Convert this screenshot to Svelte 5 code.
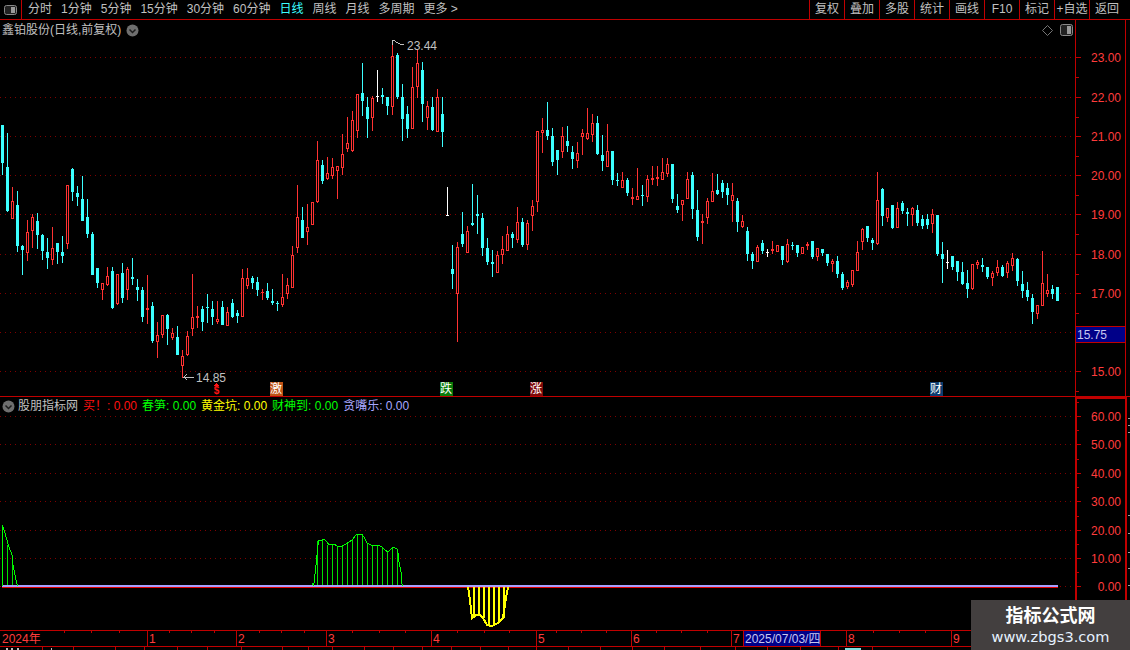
<script>
  const raw = `c 125 163 125 175|c 167 211 133 212|r 201 219 187 219|c 205 246 191 252|c 246 250 245 275|r 232 253 220 261|r 217 231 214 248|c 221 235 213 249|c 235 251 234 260|c 252 258 238 269|r 248 260 227 265|c 243 252 243 264|c 252 256 236 263|r 185 244 185 249|c 169 192 168 201|c 193 197 186 206|c 199 221 176 221|c 217 234 199 238|c 234 275 232 275|c 268 283 268 288|r 283 290 283 300|r 276 285 267 286|c 271 308 267 309|r 274 304 274 305|c 273 298 263 303|r 269 290 267 300|c 277 279 258 285|c 287 290 279 301|c 290 317 287 322|r 308 310 275 324|c 306 341 302 343|r 335 342 322 358|r 315 335 315 338|c 315 329 314 345|r 333 338 328 340|c 337 355 326 355|r 356 366 350 378|r 336 355 331 356|r 317 329 274 336|r 316 318 306 328|c 309 322 306 331|c 307 308 294 323|c 309 317 301 325|r 319 322 301 324|c 307 325 301 325|r 312 326 307 326|c 303 317 299 318|c 313 316 310 323|r 278 317 269 317|r 278 286 268 289|c 278 283 276 289|c 282 290 277 296|r 292 293 289 300|c 291 298 283 300|c 301 303 289 305|c 303 304 301 311|r 297 305 274 307|r 285 294 278 299|r 255 288 246 288|r 217 248 185 253|c 220 238 207 238|r 227 232 204 245|r 202 225 202 225|r 160 202 141 203|c 165 181 160 184|r 173 179 157 180|r 167 176 158 179|r 166 171 166 199|r 154 168 134 175|r 143 149 117 152|r 120 151 111 152|r 94 131 94 138|c 93 101 63 116|c 107 119 97 138|r 98 118 96 131|w 96 97 70 102|c 95 97 88 104|c 97 106 97 115|r 56 107 40 115|c 55 97 53 99|c 97 119 84 141|c 114 129 106 138|r 87 129 67 129|r 63 87 49 98|c 70 104 62 122|r 106 118 101 130|c 107 130 97 131|r 97 132 89 132|c 114 132 97 147|w 215 216 187 216|c 269 274 245 289|r 247 294 242 342|c 234 244 212 247|r 231 253 226 253|c 223 225 184 226|c 214 216 195 234|c 218 248 213 256|c 248 262 238 265|c 262 264 250 277|r 255 273 251 273|r 249 255 236 264|r 234 251 226 251|c 234 238 232 248|r 222 240 207 243|c 222 245 218 247|r 223 245 220 250|r 206 216 200 231|r 131 202 131 212|r 130 133 118 153|c 130 136 102 140|c 136 162 128 166|c 150 160 150 175|r 136 152 127 158|c 141 146 126 152|c 152 159 146 169|r 153 161 142 168|r 133 137 129 155|r 133 139 108 140|r 123 135 114 142|c 123 154 116 155|c 155 161 135 171|r 151 167 124 167|c 151 180 151 185|c 180 181 173 186|r 180 188 172 188|c 180 193 178 196|r 197 199 188 205|r 196 200 168 200|c 195 196 185 206|r 179 197 175 202|r 178 180 166 185|r 177 179 166 186|r 172 180 158 180|r 164 174 158 177|c 164 199 164 203|c 206 210 194 213|r 200 205 200 221|r 179 199 172 199|c 175 209 172 219|c 210 237 190 241|r 221 223 214 244|r 201 218 198 224|r 191 202 173 202|c 190 194 174 195|c 183 192 180 198|c 188 195 183 205|r 195 201 183 222|c 201 222 198 232|r 221 227 215 228|c 231 254 227 261|c 254 261 252 269|r 247 262 245 262|c 243 251 240 254|w 252 253 249 257|r 249 251 241 254|r 245 252 245 252|c 246 260 246 265|r 244 262 239 263|c 245 246 242 250|c 245 253 245 257|r 247 254 247 254|r 244 246 242 250|c 241 257 241 259|r 248 257 248 261|c 249 253 249 256|c 254 263 254 266|r 261 264 259 272|c 261 274 256 278|c 274 288 272 290|r 282 287 280 289|r 270 285 270 287|r 252 271 241 271|r 229 242 228 250|c 226 238 226 242|c 240 243 238 250|r 200 244 172 245|c 189 216 188 226|r 208 218 208 222|c 205 228 205 229|r 208 228 202 228|c 203 211 201 214|c 212 214 208 226|r 208 215 207 226|c 210 223 205 226|c 219 226 215 229|c 219 225 214 229|r 214 224 209 233|c 215 254 215 256|c 254 259 242 283|w 262 263 250 269|c 256 267 256 270|c 261 272 261 281|c 272 284 262 285|c 283 289 270 298|r 264 289 264 290|r 262 265 260 269|c 265 267 258 272|c 267 277 267 279|r 273 278 271 286|r 267 273 260 276|c 267 276 265 277|r 263 273 261 278|r 258 266 253 271|c 259 281 258 286|c 284 291 271 298|c 290 297 282 301|c 298 312 294 324|r 305 314 305 319|r 283 306 251 306|r 290 294 274 297|c 289 294 285 299|c 287 301 287 301`;

  const candles = raw.split('|').map((s, i) => {
    const [t, bt, bb, wt, wb] = s.split(' ');
    return { t, x: 2 + 5 * i, bt: +bt, bb: +bb, wt: +wt, wb: +wb };
  });

  const priceRows = [
    [57, '23.00'], [97, '22.00'], [136, '21.00'], [175, '20.00'], [214, '19.00'],
    [254, '18.00'], [293, '17.00'], [371, '15.00']
  ];
  const gridY = [57, 97, 136, 175, 214, 254, 293, 332, 371];
  const subRows = [
    [416, '60.00'], [444, '50.00'], [473, '40.00'], [501, '30.00'],
    [530, '20.00'], [558, '10.00'], [586, '0.00']
  ];

  const menu = ['分时', '1分钟', '5分钟', '15分钟', '30分钟', '60分钟', '日线', '周线', '月线', '多周期', '更多 >'];
  const tools = ['复权', '叠加', '多股', '统计', '画线', 'F10', '标记', '+自选', '返回'];
  const legend = [
    ['买！:', '0.00', 'red'], ['春笋:', '0.00', 'green'], ['黄金坑:', '0.00', 'yellow'],
    ['财神到:', '0.00', 'green'], ['贪嘴乐:', '0.00', 'lilac']
  ];

  const markers = [
    { x: 270, t: '激', c: '#bf5316' }, { x: 440, t: '跌', c: '#0a7a0a' },
    { x: 530, t: '涨', c: '#7e0a0a' }, { x: 930, t: '财', c: '#0c3c70' }
  ];

  const hump = [[313, 586], [314, 583], [316, 565], [318, 545], [318, 541], [322, 540], [324, 539], [327, 542], [329, 545], [331, 544], [334, 544], [337, 546], [342, 546], [346, 544], [349, 542], [352, 540], [356, 535], [359, 534], [362, 534], [365, 539], [367, 543], [371, 545], [374, 545], [378, 545], [382, 547], [385, 550], [388, 552], [392, 548], [393, 547], [397, 549], [398, 553], [399, 562], [401, 572], [402, 584], [403, 586]];
  const humpBars = Array.from({ length: 19 }, (_, k) => {
    const x = 312.5 + 5 * k;
    const tops = [583, 541, 539, 545, 544, 546, 546, 544, 540, 534, 534, 543, 545, 545, 547, 552, 547, 550, 584];
    return { x, y: tops[k] };
  });
  const edge = [[2, 586], [2, 525], [4, 530], [7, 540], [9, 547], [12, 555], [13, 565], [15, 575], [17, 584], [18, 586]];
  const edgeBars = [[2.5, 525], [7.5, 545], [12.5, 558], [17.5, 584]];

  const pit = [[468, 587], [470, 600], [472, 618], [476, 615], [480, 615], [483, 618], [487, 625], [492, 626], [498, 623], [503, 618], [506, 598], [508, 587]];
  const pitBars = [[468, 587], [473, 618], [478, 615], [483, 618], [488, 625], [493, 626], [498, 623], [503, 618], [507, 590]];

  const pts = (a) => a.map((p) => p.join(',')).join(' ');

  const monthMarks = [
    [147, '1'], [236, '2'], [326, '3'], [431, '4'], [536, '5'], [631, '6'], [731, '7'], [846, '8'], [951, '9']
  ];
  const ticks = [64, 91, 119, 169, 191, 214, 259, 281, 304, 352, 379, 405, 457, 484, 509, 556, 581, 606, 656, 681, 707, 873, 899, 925];
  const bottomDiv = [42, 73, 115, 144, 177, 207, 241, 282, 308, 332, 364, 393, 422, 451, 480, 508, 536, 568, 600, 632, 664, 700, 735, 767, 800, 838, 872];
  const edgeTicks = [418, 425, 432, 515, 533, 552, 568, 585];
</script>

<div class="app">
  <header class="toolbar">
    <button class="panel-toggle" aria-label="切换">
      <svg width="13" height="10" viewBox="0 0 13 10">
        <rect x="0.5" y="0.5" width="12" height="9" rx="2" fill="#222" stroke="#888" />
        <rect x="7" y="2" width="4" height="6" fill="#999" />
      </svg>
    </button>
    <nav class="menu">
      {#each menu as m}
        <span class:active={m === '日线'}>{m}</span>
      {/each}
    </nav>
    <div class="tools">
      {#each tools as t}
        <span class="tool">{t}</span>
      {/each}
    </div>
  </header>

  <section class="pane main-pane">
    <div class="pane-title">
      <span>鑫铂股份(日线,前复权)</span>
      <svg class="chev" width="13" height="13" viewBox="0 0 13 13">
        <circle cx="6.5" cy="6.5" r="6" fill="#6e6e6e" />
        <path d="M3.5 5.5 L6.5 8.5 L9.5 5.5" fill="none" stroke="#1c1c1c" stroke-width="1.5" />
      </svg>
    </div>
    <div class="pane-icons">
      <svg width="11" height="11" viewBox="0 0 11 11">
        <path d="M5.5 0.5 L10.5 5.5 L5.5 10.5 L0.5 5.5 Z" fill="none" stroke="#777" />
      </svg>
      <svg width="13" height="12" viewBox="0 0 13 12">
        <rect x="0.5" y="0.5" width="12" height="11" rx="2" fill="#222" stroke="#888" />
        <rect x="7" y="2" width="4" height="8" fill="#999" />
      </svg>
    </div>
    <svg class="plot" width="1075" height="376" viewBox="0 20 1075 376" shape-rendering="crispEdges">
      {#each gridY as y}
        <line class="grid" x1="0" x2="1075" y1={y + 0.5} y2={y + 0.5} />
      {/each}
      {#each candles as c}
        <rect class={c.t + '-fill'} x={c.x} y={c.wt} width="1" height={c.wb - c.wt} />
        {#if c.t === 'r' && c.bb - c.bt > 2}
          <rect class="hollow" x={c.x - 0.5} y={c.bt + 0.5} width="2" height={c.bb - c.bt - 1} />
        {:else}
          <rect class={c.t + '-fill'} x={c.x - 1} y={c.bt} width="3" height={Math.max(c.bb - c.bt, 1)} />
        {/if}
      {/each}
      <polyline class="note-line" points="392,45 392,40 394,40 396,42 400,44 404,44" />
      <text class="note" x="407" y="50">23.44</text>
      <polyline class="note-line" points="187,374 184,377 194,377 184,377 187,380" />
      <text class="note" x="196" y="382">14.85</text>
      <polygon class="dollar-mark" points="216.5,383 213.5,386 219.5,386" />
      <text class="dollar" x="216.5" y="394">$</text>
      {#each markers as m}
        <rect x={m.x} y="382" width="13" height="14" fill={m.c} />
        <text class="marker" x={m.x} y="393">{m.t}</text>
      {/each}
    </svg>
    <svg class="axis" width="55" height="376" viewBox="1075 20 55 376" shape-rendering="crispEdges">
      <line class="ax" x1="1075.5" x2="1075.5" y1="20" y2="396" />
      <line class="ax" x1="1125.5" x2="1125.5" y1="20" y2="396" />
      {#each priceRows as [y, label]}
        <line class="ax" x1="1076" x2="1081" y1={y + 0.5} y2={y + 0.5} />
        <line class="ax" x1="1076" x2="1079" y1={y + 20.5} y2={y + 20.5} />
        <text class="price" x="1121" y={y + 5}>{label}</text>
      {/each}
      <rect class="last-box" x="1075.5" y="326.5" width="50" height="16" />
      <text class="last-price" x="1077" y="339">15.75</text>
    </svg>
  </section>

  <section class="pane sub-pane">
    <div class="pane-title legend">
      <svg class="chev" width="13" height="13" viewBox="0 0 13 13">
        <circle cx="6.5" cy="6.5" r="6" fill="#6e6e6e" />
        <path d="M3.5 5.5 L6.5 8.5 L9.5 5.5" fill="none" stroke="#1c1c1c" stroke-width="1.5" />
      </svg>
      <span class="legend-name">股朋指标网</span>
      {#each legend as [name, value, tone]}
        <span class="legend-item {tone}">{name} {value}</span>
      {/each}
    </div>
    <svg class="plot" width="1075" height="233" viewBox="0 397 1075 233" shape-rendering="crispEdges">
      {#each subRows as [y]}
        <line class="grid" x1="0" x2="1075" y1={y + 0.5} y2={y + 0.5} />
      {/each}
      <line class="base-red" x1="2" x2="1058" y1="587.5" y2="587.5" />
      <rect class="base-lilac" x="2" y="585" width="1056" height="2" />
      {#each edgeBars as [x, y]}
        <line class="green-bar" x1={x} x2={x} y1={y} y2="585" />
      {/each}
      {#each humpBars as b}
        <line class="green-bar" x1={b.x} x2={b.x} y1={b.y} y2="585" />
      {/each}
      {#each pitBars as [x, y]}
        <line class="yellow-bar" x1={x + 0.5} x2={x + 0.5} y1="587" y2={y} />
      {/each}
      <polyline class="green-line" points={pts(edge)} />
      <polyline class="green-line" points={pts(hump)} />
      <polyline class="yellow-line" points={pts(pit)} />
    </svg>
    <svg class="axis" width="55" height="233" viewBox="1075 397 55 233" shape-rendering="crispEdges">
      <rect class="ax-fill" x="1075" y="397" width="52" height="2" />
      <rect class="ax-fill" x="1075" y="397" width="2" height="233" />
      <rect class="ax-fill" x="1125" y="397" width="2" height="233" />
      {#each subRows as [y, label]}
        <line class="ax" x1="1077" x2="1081" y1={y + 0.5} y2={y + 0.5} />
        <line class="ax" x1="1077" x2="1079" y1={y - 13.5} y2={y - 13.5} />
        <text class="price" x="1121" y={y + 5}>{label}</text>
      {/each}
      {#each edgeTicks as y}
        <line class="edge-tick" x1="1128" x2="1130" y1={y + 0.5} y2={y + 0.5} />
      {/each}
    </svg>
  </section>

  <footer class="timeline">
    <svg width="1130" height="20" viewBox="0 630 1130 20" shape-rendering="crispEdges">
      <line class="ax" x1="0" x2="1130" y1="630.5" y2="630.5" />
      <line class="ax" x1="0" x2="1130" y1="646.5" y2="646.5" />
      {#each ticks as x}
        <line class="ax" x1={x + 0.5} x2={x + 0.5} y1="631" y2="633" />
      {/each}
      <text class="month" x="2" y="643">2024年</text>
      {#each monthMarks as [x, label]}
        <line class="ax" x1={x + 0.5} x2={x + 0.5} y1="631" y2="646" />
        <text class="month" x={x + 2} y="643">{label}</text>
      {/each}
      <rect class="date-box" x="743.5" y="630.5" width="77" height="16" />
      <text class="date-text" x="745" y="643">2025/07/03/四</text>
      {#each bottomDiv as x}
        <line class="ax" x1={x + 0.5} x2={x + 0.5} y1="647" y2="650" />
      {/each}
      <rect class="peek" x="6" y="648" width="2" height="2" />
      <rect class="peek" x="11" y="648" width="2" height="2" />
      <rect class="peek" x="17" y="648" width="2" height="2" />
      <rect class="peek" x="51" y="648" width="1" height="2" />
      <rect class="peek-cyan" x="845" y="648" width="16" height="2" />
    </svg>
  </footer>

  <aside class="watermark">
    <strong>指标公式网</strong>
    <span>www.zbgs3.com</span>
  </aside>
</div>

<style>
  :global(body) {
    margin: 0;
    background: #000;
  }
  .app {
    position: relative;
    width: 1130px;
    height: 650px;
    overflow: hidden;
    background: #000;
    display: flex;
    flex-direction: column;
    font-family: "Liberation Sans", "Noto Sans CJK SC", sans-serif;
    font-size: 12px;
    color: #c0c0c0;
  }
  .toolbar {
    display: flex;
    height: 19px;
    border-bottom: 1px solid #c00000;
    flex: none;
    line-height: 19px;
    white-space: nowrap;
  }
  .panel-toggle {
    width: 22px;
    height: 19px;
    padding: 0;
    background: none;
    border: 0;
    border-right: 1px solid #c00000;
    display: flex;
    align-items: center;
    justify-content: center;
  }
  .menu {
    display: flex;
    gap: 9px;
    padding-left: 6px;
  }
  .menu .active {
    color: #3cffff;
  }
  .tools {
    display: flex;
    margin-left: auto;
  }
  .tool {
    width: 34px;
    border-left: 1px solid #c00000;
    text-align: center;
    flex: none;
  }
  .tool:last-child {
    width: 34px;
    padding-right: 6px;
  }
  .pane {
    position: relative;
    display: flex;
    flex: none;
  }
  .main-pane {
    height: 376px;
  }
  .sub-pane {
    height: 233px;
    border-top: 1px solid #c00000;
  }
  .pane svg {
    display: block;
    flex: none;
  }
  .pane-title {
    position: absolute;
    left: 2px;
    top: 2px;
    display: flex;
    align-items: center;
    gap: 5px;
    height: 16px;
    line-height: 16px;
    white-space: nowrap;
  }
  .legend {
    left: 2px;
    top: 1px;
    gap: 5px;
  }
  .legend-name {
    margin-left: -2px;
  }
  .legend-item.red { color: #ff1010; }
  .legend-item.green { color: #00ff00; }
  .legend-item.yellow { color: #ffff00; }
  .legend-item.lilac { color: #a8a8ff; }
  .pane-icons {
    position: absolute;
    left: 1042px;
    top: 4px;
    display: flex;
    align-items: center;
    gap: 7px;
  }
  .grid {
    stroke: #800000;
    stroke-dasharray: 1 4;
  }
  .c-fill { fill: #3cffff; }
  .r-fill { fill: #ff3232; }
  .w-fill { fill: #ffffff; }
  .hollow {
    fill: #000;
    stroke: #ff3232;
  }
  .note {
    fill: #c0c0c0;
    font-size: 12px;
  }
  .note-line {
    fill: none;
    stroke: #c0c0c0;
  }
  .dollar {
    fill: #ff1414;
    font-weight: 700;
    font-size: 10px;
    text-anchor: middle;
  }
  .dollar-mark { fill: #ff1414; }
  .marker {
    fill: #fff;
    font-size: 12px;
  }
  .ax {
    stroke: #c00000;
  }
  .ax-fill {
    fill: #c00000;
  }
  .price {
    fill: #ff3c3c;
    font-size: 12px;
    text-anchor: end;
  }
  .last-box, .date-box {
    fill: #000088;
    stroke: #c00000;
  }
  .last-price, .date-text {
    fill: #c8c8f0;
    font-size: 12px;
  }
  .edge-tick {
    stroke: #a0a0a0;
  }
  .base-red {
    stroke: #e00000;
  }
  .base-lilac {
    fill: #a8a0ff;
  }
  .green-bar {
    stroke: #00e000;
    stroke-width: 1;
  }
  .yellow-bar {
    stroke: #ffff00;
    stroke-width: 2;
  }
  .green-line {
    fill: none;
    stroke: #00ff00;
    stroke-width: 1;
  }
  .yellow-line {
    fill: none;
    stroke: #ffff00;
    stroke-width: 2;
  }
  .timeline {
    height: 20px;
    flex: none;
  }
  .timeline svg {
    display: block;
  }
  .month {
    fill: #ff3c3c;
    font-size: 12px;
  }
  .peek { fill: #c0c0c0; }
  .peek-cyan { fill: #7fe0e0; }
  .watermark {
    position: absolute;
    right: 0;
    bottom: 0;
    width: 159px;
    height: 50px;
    background: #433f3f;
    display: flex;
    flex-direction: column;
    align-items: center;
    color: #fff;
    box-sizing: border-box;
    padding-top: 5px;
  }
  .watermark strong {
    font-size: 18px;
    line-height: 22px;
    font-weight: 700;
  }
  .watermark span {
    line-height: 20px;
    color: #e6f2ff;
    font-family: "DejaVu Sans", sans-serif;
    font-size: 14.6px;
  }
</style>
